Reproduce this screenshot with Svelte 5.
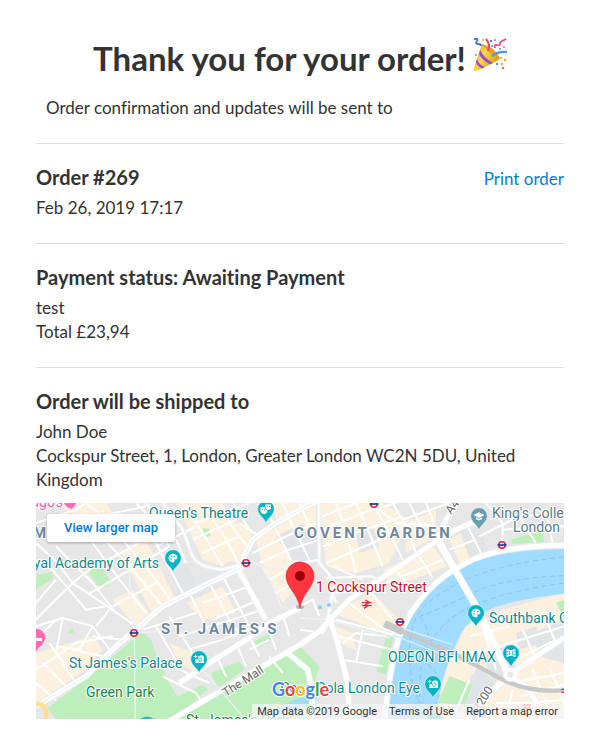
<script>
  const tan = [
    '60,0 210,0 250,60 180,100 120,40', '255,150 330,110 420,290 350,335', '230,290 290,260 340,330 300,370',
    '420,0 560,0 620,150 560,190 500,170', '550,40 650,80 620,190 580,170', '660,110 792,30 830,210 740,300 680,200',
    '0,450 170,400 200,440 150,500 0,600', '450,300 560,250 600,330 500,350', '700,0 840,0 840,90 740,90',
    '850,0 1040,0 1120,50 1060,180 960,210 870,190', '1110,60 1200,20 1200,100 1110,150', '1040,200 1190,130 1235,190 1130,230 1060,240',
    '890,330 1010,270 1090,350 1050,390', '1240,110 1310,70 1340,160 1270,180', '900,370 950,390 960,440 910,420',
    '1290,370 1400,320 1584,270 1584,648 1200,648 1230,500', '400,420 470,450 480,510 430,480'
  ];
  const parks = [
    '318,388 345,410 365,470 400,540 430,590 458,630 420,648 60,648 35,615 160,520',
    '150,200 200,195 222,235 215,252 190,250', '0,215 50,208 50,228 0,258', '500,75 520,78 524,100 502,102',
    '425,580 500,545 515,560 445,620', '525,510 610,475 625,500 545,555', '655,415 700,392 706,412 665,436',
    '792,430 850,490 830,560 820,648 410,648 560,560', '1050,402 1072,402 1050,515 1022,505',
    '1240,520 1310,545 1285,605 1205,600', '1425,110 1520,82 1525,118 1425,122', '1560,300 1584,290 1584,345',
    '100,378 113,378 113,390 100,390'
  ];
  const grey = [
    '400,200 450,180 500,280 430,290', '720,100 800,60 850,180 800,220', '1270,80 1330,70 1355,140 1300,165',
    '1340,460 1420,420 1440,500 1370,540', '1490,390 1584,350 1584,480 1510,460', '1240,600 1330,490 1380,545 1300,648',
    '960,90 1010,70 1030,130 970,150', '1440,390 1500,370 1510,420 1450,440'
  ];
  const minor = [
    'M0,120L60,175 110,240 0,350', 'M110,240L215,310 300,370', 'M40,190L150,320 210,310', 'M0,300L60,230',
    'M60,130L170,240 240,330', 'M170,120L250,230 330,330', 'M215,120L290,200 380,310', 'M250,100L330,190 410,300',
    'M290,60L360,120 440,270', 'M110,240L160,200 310,120', 'M155,275L300,190 400,130', 'M230,310L360,240',
    'M260,100L420,20', 'M360,130L480,70', 'M0,60L120,20 150,0', 'M150,0L240,70 300,120', 'M300,0L350,50 400,130',
    'M330,0L420,110 450,180', 'M190,40L330,10', 'M440,0L500,90 560,190', 'M500,0L570,110 610,185',
    'M560,30L640,140', 'M610,60L670,100', 'M480,60L640,0', 'M470,110L600,50', 'M500,150L610,100', 'M590,0L640,80',
    'M650,150L750,100 840,60', 'M670,180L760,140 850,110', 'M700,230L790,180 850,170', 'M720,80L790,220',
    'M760,50L820,170', 'M720,270L790,230', 'M740,0L770,70', 'M790,0L830,90', 'M680,0L710,60',
    'M520,240L580,350 610,390', 'M460,270L510,370', 'M560,220L640,370', 'M500,300L640,250', 'M530,350L670,290',
    'M400,340L470,450 500,500', 'M360,370L430,490', 'M320,380L480,330', 'M430,400L590,350 680,320', 'M460,440L560,410 640,380',
    'M640,400L670,460', 'M690,360L720,440', 'M740,330L760,400', 'M600,420L630,490', 'M540,455L570,520', 'M380,520L480,570 500,600', 'M430,500L520,540',
    'M0,370L80,345 170,370 220,440', 'M80,345L60,450 120,540', 'M170,370L130,440 60,430', 'M20,480L100,560', 'M0,540L60,590', 'M0,500L120,420 230,400',
    'M220,320L180,370', 'M170,400L260,410', 'M110,440L200,460', 'M40,420L90,490', 'M60,350L0,410',
    'M860,40L960,0', 'M860,80L980,30 1080,0', 'M860,130L960,90 1100,40', 'M870,180L1010,120 1130,60', 'M900,0L930,90 960,210',
    'M960,0L1000,90 1040,190', 'M1010,0L1060,90 1100,170', 'M1070,0L1110,70 1140,150', 'M870,225L1010,220 1030,240', 'M890,190L980,230',
    'M1120,0L1150,60 1220,80', 'M1170,0L1190,50 1190,110', 'M1100,50L1240,0', 'M1030,20L1080,60 1200,70',
    'M1080,200L1110,240', 'M1150,160L1190,225', 'M1050,240L1220,170', 'M1000,260L1060,340 1100,350', 'M940,300L1030,370 1080,390',
    'M900,300L890,270 1000,260', 'M900,350L1090,400', 'M905,400L1070,440', 'M920,470L1040,490', 'M920,420L960,390 1050,400', 'M930,560L1040,560', 'M980,380L960,480',
    'M1290,60L1340,160', 'M1240,140L1320,110', 'M1350,0L1400,60 1400,140', 'M1330,100L1450,40 1584,30', 'M1450,40L1500,120', 'M1400,80L1584,70', 'M1530,30L1550,120',
    'M1300,400L1420,370', 'M1290,450L1400,430', 'M1340,370L1380,500', 'M1390,430L1584,370', 'M1420,480L1560,410', 'M1460,380L1500,470', 'M1530,350L1560,420',
    'M1430,540L1584,510', 'M1450,580L1584,545', 'M1490,500L1550,648', 'M1540,490L1584,600', 'M1380,600L1480,600 1584,590', 'M1300,530L1250,648', 'M1350,550L1330,648', 'M1430,560L1410,648',
    'M700,460L740,510', 'M640,440L700,410', 'M792,310L830,290 850,340', 'M792,380L860,390 880,360', 'M800,420L870,380'
  ];
  const pale = [
    'M380,0L440,80 470,160Q490,195 560,200L615,185', 'M690,200L735,310 792,330', 'M640,170L690,200 792,170',
    'M848,0L850,180Q880,210 895,240L875,345', 'M792,345L882,350 1060,405', 'M290,100L280,240 295,390 298,648', 'M500,500L620,640', 'M295,390L370,385'
  ];
  const major = [
    'M0,610L150,520 240,430 300,380 380,310 520,240 615,195 625,160 650,110 720,60 792,20 850,-10',
    'M390,660L560,560 680,490 792,425 850,385 882,350', 'M430,540L520,480 640,405 700,360 792,315', 'M610,205L690,350',
    'M882,350L940,290 1000,250 1120,170 1200,115 1260,80 1340,45', 'M1205,110L1230,50 1265,-5',
    'M1584,126Q1380,130 1290,180Q1150,250 1090,400Q1060,500 1045,660', 'M882,350L905,420 935,540 942,660',
    'M755,450L815,500 830,570 825,660', 'M1425,520L1370,560 1300,660', 'M1425,515L1470,480 1584,405', 'M1425,520L1470,550 1530,640'
  ];
  const stations = [[210, 60], [98, 130], [338, 1], [466, 42], [364, 119]];
  const pins = [
    { x: 230, y: 20, icon: 'mask' }, { x: 137, y: 69, icon: 'art' }, { x: 163, y: 170, icon: 'camera' },
    { x: 440, y: 124, icon: 'art' }, { x: 475, y: 164, icon: 'film' }, { x: 397, y: 195, icon: 'camera' },
    { x: 443, y: 27, icon: 'school', fill: '#6c9dae' }
  ];
</script>

<main>
  <header>
    <h1>
      Thank you for your order!
      <svg class="party" viewBox="0 0 34 34" role="img" aria-label="Party popper">
        <defs>
          <linearGradient id="cone" x1="0" x2="1" y1="0" y2="0.5">
            <stop offset="0" stop-color="#c98a12" /><stop offset=".45" stop-color="#fbd94a" /><stop offset="1" stop-color="#d79a18" />
          </linearGradient>
        </defs>
        <path d="M9 6Q20 8 27 20Q26 22 22 24L4 33Q0 34 1 30Z" fill="url(#cone)" />
        <path d="M9 6Q20 8 27 20Q17 18 9 6" fill="#e0a51f" />
        <path d="M7 12Q11 20 20 25L17 26.500Q9 22 6 16ZM4 21Q6 27 12 29L9 30.500Q4 28 3 24Z" fill="#9b4fd0" />
        <path d="M15 13Q18 7 13 1" fill="none" stroke="#ee4668" stroke-width="2" />
        <path d="M19 18Q25 13 34 14" fill="none" stroke="#4f93ed" stroke-width="2.4" />
        <path d="M1 1Q6 0 4 3T5 6T8 8" fill="none" stroke="#3c6fd6" stroke-width="1.8" />
        <path d="M22 10Q21 6 24 7T27 6T29 3T33 1" fill="none" stroke="#e34b72" stroke-width="1.8" />
        <g fill="#4c8ce8"><circle cx="18" cy="3" r="1.2" /><circle cx="19" cy="8" r="1" /><circle cx="24" cy="26" r="1.2" /><circle cx="27" cy="11" r=".9" /></g>
        <g fill="#f3a54a"><circle cx="10" cy="2" r="1.1" /><circle cx="28" cy="20" r="1.1" /><circle cx="32" cy="22" r="1.3" /><circle cx="29" cy="26" r="1.2" /></g>
        <g fill="#ec6a8d"><circle cx="3" cy="17" r="1.1" /><circle cx="31" cy="9" r="1" /><circle cx="30" cy="30" r="1.3" /><circle cx="22" cy="2" r="1" /></g>
      </svg>
    </h1>
    <p>Order confirmation and updates will be sent to</p>
  </header>

  <section>
    <div class="row">
      <h2>Order #269</h2>
      <a href="#print">Print order</a>
    </div>
    <p>Feb 26, 2019 17:17</p>
  </section>

  <section>
    <h2>Payment status: Awaiting Payment</h2>
    <p>test</p>
    <p>Total £23,94</p>
  </section>

  <section>
    <h2>Order will be shipped to</h2>
    <p>John Doe</p>
    <p>Cockspur Street, 1, London, Greater London WC2N 5DU, United Kingdom</p>
    <div class="map">
      <svg class="canvas" viewBox="0 0 528 216" preserveAspectRatio="xMidYMid slice">
        <g transform="scale(.33333)">
          <rect width="1584" height="648" fill="#e7e7e7" />
          {#each tan as points}<polygon {points} fill="#fcf1df" />{/each}
          {#each grey as points}<polygon {points} fill="#e2e5e7" />{/each}
          {#each parks as points}<polygon {points} fill="#bdeebb" />{/each}
          <g fill="none" stroke="#fff" stroke-linejoin="round">
            {#each minor as d}<path {d} stroke-width="6" />{/each}
          </g>
          <path fill="#9fdcfe" d="M1584,138Q1390,142 1310,176Q1180,236 1111,340Q1076,400 1066,500L1050,648H1195L1210,570Q1230,480 1275,390Q1300,350 1350,325Q1420,290 1584,272Z" />
          <path fill="#9fdcfe" d="M690,648Q730,600 800,585T830,600Q790,610 750,648Z" />
          <g fill="none" stroke="#7db8e6" stroke-width="2" stroke-dasharray="16 10">
            <path d="M1584,162Q1400,180 1290,230T1145,335Q1190,380 1170,430T1150,600" />
            <path d="M1584,218Q1400,225 1310,270T1140,345Q1110,420 1125,510T1160,600" />
            <path d="M1584,240Q1300,280 1220,370T1190,500T1180,648" />
          </g>
          <g fill="none" stroke="#edf3f7" stroke-linejoin="round">
            {#each pale as d}<path {d} stroke-width="4" />{/each}
            <path d={pale[0]} stroke-width="12" /><path d={pale[3]} stroke-width="11" />
          </g>
          <g fill="none" stroke-linejoin="round">
            {#each major as d}<path {d} stroke="#eef2f5" stroke-width="18" />{/each}
            {#each major as d}<path {d} stroke="#fff" stroke-width="14" />{/each}
            <path d={pale[0]} stroke="#fff" stroke-width="5" /><path d={pale[3]} stroke="#fff" stroke-width="5" />
            <path d={major[0]} stroke="#e9eff4" stroke-width="3" />
            <path d="M1205,110L1320,310 1420,520" stroke="#fff" stroke-width="21" />
            <path d="M1080,370L1250,425M1070,395L1230,460" stroke="#dceaf3" stroke-width="4" />
            <path d="M1050,365L1250,450 1400,530Q1480,570 1584,562" stroke="#c6c8c9" stroke-width="13" />
            <path d="M1045,362L1100,386" stroke="#c6c8c9" stroke-width="22" />
            <circle cx="1423" cy="515" r="15" fill="#e8e8e8" stroke="#fff" stroke-width="12" />
            <circle cx="882" cy="350" r="8" fill="#e8e8e8" stroke="#fff" stroke-width="12" />
            <path d="M0,603Q35,600 30,648" stroke="#fbe09a" stroke-width="14" />
          </g>
          <circle cx="852" cy="313" r="6" fill="#8bd2f5" /><circle cx="879" cy="306" r="6" fill="#8bd2f5" />
          <g fill="none" stroke="#e52552" stroke-width="4">
            <path d="M978,299H1007M978,308H1007M984,308L1000,299M988,291L1001,299M984,316L996,308" />
            <path d="M1576,559H1590M1576,568H1590M1460,606H1485M1460,615H1485" />
          </g>
        </g>

        {#each stations as [x, y]}
          <circle cx={x} cy={y} r="3.2" fill="#fff" stroke="#e1253f" stroke-width="1.6" />
          <path d="M{x - 4.5} {y}h9" stroke="#263a8e" stroke-width="1.7" />
        {/each}

        {#each pins as pin}
          <g transform="translate({pin.x} {pin.y})">
            <path d="M0 0C-1.5-5-8.3-8-8.3-14A8.3 8.3 0 0 1 8.3-14C8.3-8 1.5-5 0 0Z" fill={pin.fill ?? '#00b4c3'} stroke="#fff" stroke-width=".5" />
            {#if pin.icon === 'camera'}
              <path d="M-3.5-14H-1V-16.500H.5L1-17.500H3.500L4-16.500H5V-10H-3.500Z" fill="#fff" />
              <path d="M-5-16.500h3.400M-3.300-18.200v3.400" stroke="#fff" />
              <circle cx="1.300" cy="-13.300" r="1.700" fill="none" stroke="#00b4c3" stroke-width=".8" />
            {:else if pin.icon === 'art'}
              <path d="M-4.5-14A4.5 4.2 0 0 1 4.5-14Q4-12 1-12.500Q2.500-9.500 0-9.500Q-4-10-4.5-14Z" fill="#fff" />
              <g fill="#00b4c3"><circle cx="-2" cy="-13" r=".8" /><circle cx="-1.3" cy="-15.7" r=".8" /><circle cx="1.6" cy="-15.5" r=".8" /></g>
            {:else if pin.icon === 'film'}
              <path d="M-4.500-18h2v1h5v-1h2v8h-2v-1h-5v1h-2z" fill="#fff" />
              <path d="M-1.600-16v4M1.600-16v4M-4.500-15.500h1.500M-4.500-12.500h1.500M3-15.500h1.500M3-12.500h1.500" stroke="#00b4c3" stroke-width=".8" />
            {:else if pin.icon === 'mask'}
              <path d="M-.5-18.500h5.500v4q-2.500 3-5.500 0ZM-5.500-16h4q0 3 3 3.500q-.5 3.500-3.500 3.500t-3.500-3z" fill="#fff" />
              <path d="M1-16.500h1M3-16.500h1M-4-13.500h1M-2-13h1" stroke="#00b4c3" />
            {:else}
              <path d="M-5.5-15L0-17.8 5.5-15 0-12ZM-3-12.7L0-11 3-12.7V-11L0-9.5-3-11Z" fill="#fff" />
            {/if}
          </g>
        {/each}
        <path d="M0 126a8.3 8.3 0 0 1 9 9c0 6-7 9-9 14Z" fill="#ff6bb4" /><path d="M0 135h6v3H0z" fill="#fff" />
        <path d="M28 0h12q-1 4-5 6q-5-2-7-6" fill="#ff6bb4" />
        <path d="M104 216q7-5 14 0ZM392 216q-1-6 6-6t8 6Z" fill="#2fbcc6" />

        <g class="labels">
          <text x="113" y="15">Queen's Theatre</text>
          <text x="123" y="65" text-anchor="end">Royal Academy of Arts</text>
          <text x="33" y="165">St James's Palace</text>
          <text x="50" y="194" class="park">Green Park</text>
          <text x="150" y="222" class="park">St. James's Park</text>
          <text x="453" y="120">Southbank Centre</text>
          <text x="352" y="159">ODEON BFI IMAX</text>
          <text x="384" y="190" text-anchor="end">Coca-Cola London Eye</text>
          <text x="456" y="15" class="slate">King's College</text>
          <text x="477" y="29" class="slate">London</text>
          <text x="280" y="89" class="place">1 Cockspur Street</text>
          <text x="-8" y="4" class="pink">lago's</text>
          <text x="258" y="35" class="area">COVENT GARDEN</text>
          <text x="125" y="131" class="area">ST. JAMES'S</text>
          <text x="-3" y="35" class="area">MAYFAIR</text>
          <text class="road" transform="translate(190 194) rotate(-33)">The Mall</text>
          <text class="road" transform="translate(415 12) rotate(-52)">A4</text>
          <text class="road" transform="translate(439 216) rotate(-58)">A3200</text>
        </g>
        <ellipse cx="264" cy="104" rx="4" ry="2" fill="#777" opacity=".5" />
        <path d="M264 105C262 91 250 84 250 73A14 14 0 0 1 278 73C278 84 266 91 264 105Z" fill="#ff353f" stroke="#d5202b" stroke-width=".5" />
        <circle cx="264" cy="73" r="5" fill="#98000d" />
        <text class="logo" x="236" y="193"><tspan fill="#4285f4">G</tspan><tspan fill="#ea4335">o</tspan><tspan fill="#fbbc05">o</tspan><tspan fill="#4285f4">g</tspan><tspan fill="#34a853">l</tspan><tspan fill="#ea4335">e</tspan></text>
      </svg>
      <a class="larger" href="#map">View larger map</a>
      <div class="legal">
        <span>Map data ©2019 Google</span>
        <a href="#terms">Terms of Use</a>
        <a href="#report">Report a map error</a>
      </div>
    </div>
  </section>
</main>

<style>
  :global(body) { margin: 0; background: #fff; }
  main { padding: 36px 36px 32px; color: #333; font: 17px/24px Lato, "Open Sans", sans-serif; font-variant-ligatures: none; }
  h1, h2, p { margin: 0; }
  header { padding-bottom: 23px; border-bottom: 1px solid #e0e0e0; }
  h1 { display: flex; justify-content: center; gap: 7px; font-size: 33px; line-height: 44px; font-weight: 700; }
  .party { flex: none; width: 34px; height: 34px; margin-top: 2px; }
  header p { margin-top: 16px; padding: 0 10px; }
  section { padding: 19px 0 23px; border-bottom: 1px solid #e0e0e0; }
  section:last-child { border: 0; padding-bottom: 0; }
  h2 { margin-bottom: 5px; font-size: 20px; line-height: 28px; font-weight: 700; }
  .row { display: flex; justify-content: space-between; align-items: baseline; }
  a { color: #0a7cc4; text-decoration: none; }
  .map { position: relative; height: 216px; margin-top: 11px; overflow: hidden; font-family: Roboto, sans-serif; }
  .canvas { display: block; width: 100%; height: 100%; }
  .labels { font-size: 14px; fill: #14878c; stroke: #fff; stroke-width: 2px; stroke-linejoin: round; paint-order: stroke; }
  .park { fill: #188a3c; }
  .slate { fill: #557d8b; }
  .place { fill: #c5132b; }
  .pink { fill: #f061a8; }
  .area { fill: #70879c; font-size: 15px; font-weight: 700; letter-spacing: 3px; }
  .road { fill: #666; font-size: 12px; }
  .logo { font: 700 18px Lato, sans-serif; stroke: #fff; stroke-width: 2px; paint-order: stroke; }
  .larger { position: absolute; left: 11px; top: 11px; padding: 0 17px; border-radius: 2px; background: #fff; color: #0078d7; font-size: 13px; line-height: 28px; font-weight: 500; box-shadow: 0 1px 3px rgba(0, 0, 0, .3); }
  .legal { position: absolute; right: 0; bottom: 0; display: flex; gap: 12px; padding: 0 6px 0 5px; background: rgba(245, 245, 245, .75); color: #333; font-size: 11px; line-height: 15px; }
  .legal a { color: #333; }
</style>
